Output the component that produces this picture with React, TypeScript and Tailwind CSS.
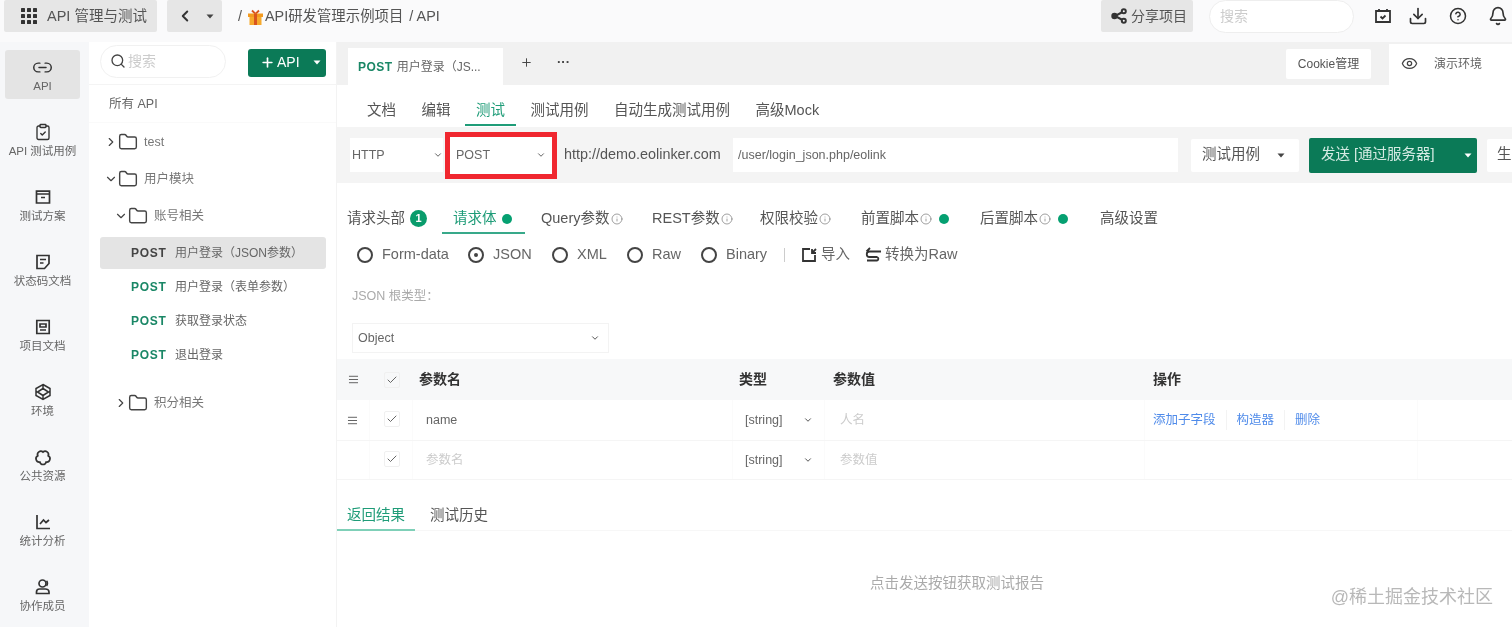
import {
  AlignJustify,
  Bell,
  Check,
  ChevronDown,
  ChevronLeft,
  ChevronRight,
  CircleHelp,
  ClipboardCheck,
  Download,
  Eye,
  Folder,
  Info,
  Link2,
  Plus,
  Search,
} from "lucide-react";
import type { ReactNode } from "react";

const FONT = "font-['Liberation_Sans','Noto_Sans_CJK_SC',sans-serif]";

function Caret({ className = "" }: { className?: string }) {
  return (
    <svg width="8" height="5" viewBox="0 0 8 5" className={`shrink-0 ${className}`}>
      <path d="M0.5 0.5h7L4 4.5z" fill="currentColor" />
    </svg>
  );
}

function GridIcon() {
  return (
    <svg width="18" height="18" viewBox="0 0 18 18" fill="#333">
      {[1, 7, 13].map((y) =>
        [1, 7, 13].map((x) => <rect key={`${x}-${y}`} x={x} y={y} width="4" height="4" rx="0.6" />)
      )}
    </svg>
  );
}

function GiftIcon() {
  return (
    <svg width="17" height="17" viewBox="0 0 17 17" className="ml-[5px] shrink-0">
      <path d="M5 1.500 8.500 5 12 1.500" fill="none" stroke="#d9541e" strokeWidth="1.800" />
      <rect x="1" y="4.500" width="15" height="3.500" fill="#f39a1f" />
      <rect x="2.500" y="8" width="12" height="8" fill="#f6a92d" />
      <rect x="7" y="4.500" width="3" height="11.500" fill="#d9541e" />
    </svg>
  );
}

function ShareIcon() {
  return (
    <svg width="18" height="18" viewBox="0 0 18 18" fill="none" stroke="#333" strokeWidth="2">
      <path d="M13.500 4.500 5 9l8.500 4.500" />
      <circle cx="13.800" cy="4.200" r="2" fill="#fafafb" />
      <circle cx="4.500" cy="9" r="2.200" fill="#333" />
      <circle cx="13.800" cy="13.800" r="2" fill="#fafafb" />
    </svg>
  );
}

function NavIcon({ name }: { name: string }) {
  const p = { width: 18, height: 18, viewBox: "0 0 18 18", fill: "none", stroke: "#333", strokeWidth: 1.7 };
  switch (name) {
    case "plan":
      return (
        <svg {...p}>
          <path d="M2.500 6V3.200h13V6M2.500 6h13v9h-13zM7 9.500h4" />
        </svg>
      );
    case "code":
      return (
        <svg {...p}>
          <path d="M3 2.500h12v8l-4.500 5H3zM6 6.500h6M6 10h3.500" />
        </svg>
      );
    case "doc":
      return (
        <svg {...p}>
          <path d="M2.800 2.500h12.400v13H2.800zM6 6h6v3H6zM6 12h6" />
        </svg>
      );
    case "env":
      return (
        <svg {...p} strokeWidth={1.5}>
          <path d="M9 1.500 16 5.500v7l-7 4-7-4v-7zM9 5.500 14.500 9 9 12.500 3.500 9zM9 1.500v4M9 12.500v4" />
        </svg>
      );
    case "res":
      return (
        <svg {...p}>
          <path d="M9 4A3.300 3.300 0 0 1 14.200 7.800A3.300 3.300 0 0 1 12.200 14A3.300 3.300 0 0 1 5.800 14A3.300 3.300 0 0 1 3.800 7.800A3.300 3.300 0 0 1 9 4z" />
        </svg>
      );
    case "stat":
      return (
        <svg {...p}>
          <path d="M3 2v13.500h13M6 11l3.500-4 2.500 2.500 3-2.500" />
        </svg>
      );
    default:
      return (
        <svg {...p}>
          <circle cx="8.500" cy="5.500" r="3.500" />
          <path d="M2.500 15.500v-1.500c0-2 1.500-3 3-3h6c1.500 0 3.500 1 3.500 3v1.500z" />
          <path d="M12.500 2.800c1.200 1 1.200 4 0 5" />
        </svg>
      );
  }
}

const navItems = [
  { icon: "link", label: "API", active: true },
  { icon: "case", label: "API 测试用例" },
  { icon: "plan", label: "测试方案" },
  { icon: "code", label: "状态码文档" },
  { icon: "doc", label: "项目文档" },
  { icon: "env", label: "环境" },
  { icon: "res", label: "公共资源" },
  { icon: "stat", label: "统计分析" },
  { icon: "team", label: "协作成员" },
];

function Sidebar() {
  return (
    <aside className="w-[89px] shrink-0 bg-[#f6f7f9] pt-[8px] pl-[5px] flex flex-col gap-[16px]">
      {navItems.map((n) => (
        <div
          key={n.label}
          className={`w-[75px] h-[49px] shrink-0 rounded-[3px] flex flex-col items-center pt-[8px] ${
            n.active ? "bg-[#e4e4e4]" : ""
          }`}
        >
          <div className="h-[18px] flex items-center justify-center">
            {n.icon === "link" ? (
              <Link2 size={21} strokeWidth={1.7} color="#333" />
            ) : n.icon === "case" ? (
              <ClipboardCheck size={18} strokeWidth={1.8} color="#333" />
            ) : (
              <NavIcon name={n.icon} />
            )}
          </div>
          <div className="mt-[2px] text-[11.5px] leading-[16px] text-[#666] whitespace-nowrap">{n.label}</div>
        </div>
      ))}
    </aside>
  );
}

function FolderRow({ open, indent, label, className = "" }: { open: boolean; indent: number; label: string; className?: string }) {
  return (
    <div className={`h-[37px] shrink-0 flex items-center text-[12.5px] text-[#777] ${className}`} style={{ paddingLeft: indent }}>
      {open ? <ChevronDown size={14} strokeWidth={2} color="#444" /> : <ChevronRight size={14} strokeWidth={2} color="#444" />}
      <Folder size={20} strokeWidth={1.7} color="#444" />
      <span className="ml-[6px] pt-[1px]">{label}</span>
    </div>
  );
}

function ApiRow({ label, active }: { label: string; active?: boolean }) {
  return (
    <div className="h-[34px] shrink-0 flex items-center">
      <div className={`w-[226px] h-[32px] ml-[11px] rounded-[3px] flex items-center pl-[31px] text-[12px] text-[#666] ${active ? "bg-[#e4e4e4]" : ""}`}>
        <span className={`font-bold tracking-[0.7px] w-[44px] ${active ? "text-[#444]" : "text-[#1a8766]"}`}>POST</span>
        <span className="whitespace-nowrap">{label}</span>
      </div>
    </div>
  );
}

function ApiTree() {
  return (
    <section className="w-[247px] shrink-0 bg-white flex flex-col">
      <div className="h-[43px] shrink-0 flex items-center pl-[11px] border-b border-[#f4f4f4]">
        <div className="w-[126px] h-[33px] rounded-full border border-[#f1f1f1] flex items-center pl-[9px] mt-[-4px]">
          <Search size={16} strokeWidth={2} color="#444" />
          <span className="ml-[2px] text-[14px] text-[#ccc]">搜索</span>
        </div>
        <div className="ml-[22px] w-[78px] h-[28px] rounded-[3px] bg-[#0b7a57] text-white flex items-center mt-[-1px] pl-[12px]">
          <Plus size={15} strokeWidth={2.6} />
          <span className="ml-[2px] text-[14px]">API</span>
          <Caret className="ml-[13px]" />
        </div>
      </div>
      <div className="h-[38px] shrink-0 flex items-center pl-[20px] pt-[2px] text-[12.5px] text-[#666] border-b border-[#fafafa]">所有 API</div>
      <FolderRow open={false} indent={15} label="test" />
      <FolderRow open indent={15} label="用户模块" />
      <FolderRow open indent={25} label="账号相关" />
      <div className="h-[2px] shrink-0" />
      <ApiRow label="用户登录（JSON参数）" active />
      <ApiRow label="用户登录（表单参数）" />
      <ApiRow label="获取登录状态" />
      <ApiRow label="退出登录" />
      <FolderRow open={false} indent={25} label="积分相关" className="mt-[12px]" />
    </section>
  );
}

function MainTabs() {
  return (
    <div className="h-[43px] shrink-0 bg-[#f1f1f1] flex">
      <div className="ml-[11px] mt-[6px] w-[155px] h-[37px] bg-white flex items-center pl-[10px] text-[12px] text-[#666]">
        <span className="font-bold text-[#1a8766] tracking-[0.5px]">POST</span>
        <span className="ml-[4px]">用户登录（JS...</span>
      </div>
      <Plus size={13} strokeWidth={1.8} color="#444" className="ml-[17px] mt-[14px]" />
      <span className="ml-[24px] mt-[12px] text-[13px] leading-[16px] font-bold text-[#444]">···</span>
      <div className="ml-auto mt-[7px] w-[85px] h-[30px] rounded-[2px] bg-white flex items-center justify-center text-[12px] text-[#555]">Cookie管理</div>
      <div className="ml-[18px] mt-[2px] w-[123px] h-[41px] bg-white flex items-center pl-[12px] pb-[2px] text-[12px] text-[#666]">
        <Eye size={17} strokeWidth={1.8} color="#444" />
        <span className="ml-[16px]">演示环境</span>
      </div>
    </div>
  );
}

function SubTabs() {
  const tabs = ["文档", "编辑", "测试", "测试用例", "自动生成测试用例", "高级Mock"];
  return (
    <div className="h-[42px] shrink-0 bg-white flex gap-[25.5px] pl-[30px] text-[14.5px] text-[#555]">
      {tabs.map((t) => (
        <div key={t} className={`relative pt-[14px] leading-[22px] whitespace-nowrap ${t === "测试" ? "text-[#1f9c78]" : ""}`}>
          {t}
          {t === "测试" && <div className="absolute left-[-11px] right-[-11px] top-[39px] h-[2px] bg-[#1f9c78]" />}
        </div>
      ))}
    </div>
  );
}

function UrlBar() {
  return (
    <div className="h-[56px] shrink-0 bg-[#f4f4f4] flex items-center pl-[13px] overflow-hidden">
      <div className="w-[93px] h-[34px] shrink-0 bg-white flex items-center pl-[2px] justify-between text-[12.5px] text-[#666]">
        HTTP
        <ChevronDown size={10} strokeWidth={2.2} color="#555" />
      </div>
      <div className="ml-[2px] w-[112px] h-[47px] shrink-0 border-[5px] border-[#f0272f] bg-white flex items-center pl-[6px] pr-[6px] justify-between text-[12.5px] text-[#666]">
        POST
        <ChevronDown size={10} strokeWidth={2.2} color="#555" />
      </div>
      <span className="ml-[7px] w-[169px] shrink-0 text-[14.4px] text-[#555] whitespace-nowrap">http://demo.eolinker.com</span>
      <div className="w-[445px] h-[34px] shrink-0 bg-white flex items-center pl-[5px] text-[12.5px] text-[#666]">/user/login_json.php/eolink</div>
      <div className="ml-[13px] w-[108px] h-[33px] shrink-0 rounded-[2px] bg-white flex items-center pl-[11px] text-[14.5px] text-[#555]">
        测试用例
        <Caret className="ml-[17px] text-[#444]" />
      </div>
      <div className="ml-[10px] w-[168px] h-[35px] shrink-0 rounded-[2px] bg-[#0b7a57] flex items-center pl-[12px] text-[14.5px] text-[#d5ebe3] whitespace-nowrap">
        发送 [通过服务器]
        <Caret className="ml-[29px] text-white" />
      </div>
      <div className="ml-[10px] w-[40px] h-[33px] shrink-0 rounded-[2px] bg-white flex items-center pl-[10px] text-[14.5px] text-[#555]">生</div>
    </div>
  );
}

const reqTabs = [
  { label: "请求头部", w: 95, badge: true },
  { label: "请求体", w: 99, active: true, dot: true },
  { label: "Query参数", w: 111, info: true },
  { label: "REST参数", w: 108, info: true },
  { label: "权限校验", w: 101, info: true },
  { label: "前置脚本", w: 119, info: true, dot: true },
  { label: "后置脚本", w: 120, info: true, dot: true },
  { label: "高级设置", w: 80 },
];

function ReqTabs() {
  return (
    <div className="h-[51px] shrink-0 flex pl-[10px] text-[14.5px] text-[#555]">
      {reqTabs.map((t) => (
        <div key={t.label} className="relative flex items-center h-[50px] pt-[21px] whitespace-nowrap" style={{ width: t.w, paddingLeft: t.active ? 11 : 0 }}>
          <span className={t.active ? "text-[#1f9c78]" : ""}>{t.label}</span>
          {t.badge && (
            <span className="ml-[5px] w-[17px] h-[17px] rounded-full bg-[#0a9c6c] text-white text-[11px] font-bold flex items-center justify-center">1</span>
          )}
          {t.info && <Info size={12} strokeWidth={1.4} color="#777" className="ml-[1px]" />}
          {t.dot && <span className={`w-[10px] h-[10px] rounded-full bg-[#05a071] ${t.active ? "ml-[5px]" : "ml-[7px]"}`} />}
          {t.active && <div className="absolute left-0 w-[83px] top-[49px] h-[2px] bg-[#38a98a]" />}
        </div>
      ))}
    </div>
  );
}

const bodyTypes = [
  { label: "Form-data", w: 111 },
  { label: "JSON", w: 84, checked: true },
  { label: "XML", w: 75 },
  { label: "Raw", w: 74 },
  { label: "Binary", w: 83 },
];

function BodyTypes() {
  return (
    <div className="h-[40px] shrink-0 flex items-center pl-[20px] pt-[1px] text-[14.5px] text-[#666]">
      {bodyTypes.map((b) => (
        <div key={b.label} className="flex items-center" style={{ width: b.w }}>
          <span className="w-[16px] h-[16px] rounded-full border-2 border-[#444] flex items-center justify-center">
            {b.checked && <span className="w-[4px] h-[4px] rounded-full bg-[#444]" />}
          </span>
          <span className="ml-[9px]">{b.label}</span>
        </div>
      ))}
      <span className="w-px h-[14px] bg-[#ccc]" />
      <svg width="16" height="16" viewBox="0 0 16 16" fill="none" stroke="#333" strokeWidth="1.8" className="ml-[16px]">
        <path d="M9 2H2v12h12V8M11 2v4h4M11 6l4-4" />
      </svg>
      <span className="ml-[4px]">导入</span>
      <svg width="18" height="16" viewBox="0 0 18 16" fill="none" stroke="#333" strokeWidth="1.8" className="ml-[14px]">
        <path d="M17 4.500H5.500a2.700 2.700 0 0 0 0 5.500H13a1.800 1.800 0 0 1 0 3.500H3M6 1 2.500 4.500" />
      </svg>
      <span className="ml-[3px]">转换为Raw</span>
    </div>
  );
}

function CheckBox() {
  return (
    <span className="w-[16px] h-[16px] border border-[#f0f0f0] rounded-[2px] flex items-center justify-center">
      <Check size={12} strokeWidth={1.8} color="#555" />
    </span>
  );
}

function Row({ className = "", cells }: { className?: string; cells: ReactNode[] }) {
  return (
    <div className={`grid grid-cols-[33px_43px_320px_92px_320px_273px_1fr] ${className}`}>
      {cells.map((c, i) => (
        <div key={i} className={`flex items-center ${i < 6 && !className.includes("head") ? "border-r border-[#fbfbfb]" : ""}`}>
          {c}
        </div>
      ))}
    </div>
  );
}

function TypeCell() {
  return (
    <div className="pl-[12px] w-full flex items-center text-[12.5px] text-[#666]">
      [string]
      <ChevronDown size={10} strokeWidth={2.4} color="#555" className="ml-[20px]" />
    </div>
  );
}

function ParamTable() {
  return (
    <div className="text-[12.5px] shrink-0">
      <Row
        className="head h-[41px] bg-[#f7f8f9] text-[14px] font-bold text-[#333]"
        cells={[
          <AlignJustify key="a" size={11} strokeWidth={2} color="#555" className="ml-[11px]" />,
          <div key="b" className="ml-[14px]"><CheckBox /></div>,
          <span key="c" className="ml-[6px]">参数名</span>,
          <span key="d" className="ml-[6px]">类型</span>,
          <span key="e" className="ml-[8px]">参数值</span>,
          <span key="f" className="ml-[8px]">操作</span>,
          null,
        ]}
      />
      <Row
        className="h-[41px] border-b border-[#f5f5f5]"
        cells={[
          <AlignJustify key="a" size={11} strokeWidth={2} color="#555" className="ml-[10px]" />,
          <div key="b" className="ml-[14px] mb-[3px]"><CheckBox /></div>,
          <span key="c" className="ml-[13px] text-[#666]">name</span>,
          <TypeCell key="d" />,
          <span key="e" className="ml-[15px] text-[#ccc]">人名</span>,
          <div key="f" className="ml-[8px] flex items-center text-[#4f8bea]">
            <span>添加子字段</span>
            <span className="mx-[10px] h-[20px] w-px bg-[#f3f3f3]" />
            <span>构造器</span>
            <span className="mx-[10px] h-[20px] w-px bg-[#f3f3f3]" />
            <span>删除</span>
          </div>,
          null,
        ]}
      />
      <Row
        className="h-[39px] border-b border-[#f5f5f5]"
        cells={[
          null,
          <div key="b" className="ml-[14px] mb-[3px]"><CheckBox /></div>,
          <span key="c" className="ml-[13px] text-[#ccc]">参数名</span>,
          <TypeCell key="d" />,
          <span key="e" className="ml-[15px] text-[#ccc]">参数值</span>,
          null,
          null,
        ]}
      />
    </div>
  );
}

function ResultArea() {
  return (
    <div className="flex-1 relative">
      <div className="mt-[22px] h-[29px] flex text-[14.5px] text-[#555] border-b border-[#f7f7f7]">
        <div className="relative w-[78px] h-[29px] pl-[10px] leading-[26px] text-[#1f9c78]">
          返回结果
          <div className="absolute left-0 right-0 top-[27px] h-[2px] bg-[#7fd0b8]" />
        </div>
        <div className="ml-[15px] leading-[26px]">测试历史</div>
      </div>
      <div className="mt-[42px] text-center text-[14.5px] leading-[20px] text-[#aaa] pl-[65px]">点击发送按钮获取测试报告</div>
    </div>
  );
}

function TopBar() {
  return (
    <header className="h-[42px] shrink-0 bg-[#fafafb] flex text-[#555]">
      <div className="ml-[4px] w-[153px] h-[32px] rounded-[2px] bg-[#e6e6e6] flex items-center pl-[16px] text-[14.5px]">
        <GridIcon />
        <span className="ml-[9px] pt-[1px]">API 管理与测试</span>
      </div>
      <div className="ml-[10px] w-[55px] h-[32px] rounded-[2px] bg-[#e6e6e6] flex items-center pl-[9px]">
        <ChevronLeft size={18} strokeWidth={2.6} color="#333" />
        <Caret className="ml-[12px] text-[#444]" />
      </div>
      <div className="ml-[16px] h-[32px] flex items-center pt-[2px] text-[14.4px]">
        <span>/</span>
        <GiftIcon />
        <span className="ml-[1px]">API研发管理示例项目</span>
        <span className="ml-[6px]">/ API</span>
      </div>
      <div className="ml-auto w-[92px] h-[32px] rounded-[2px] bg-[#e6e6e6] flex items-center pl-[9px] text-[14px]">
        <ShareIcon />
        <span className="ml-[3px] pt-[1px]">分享项目</span>
      </div>
      <div className="ml-[16px] w-[145px] h-[33px] rounded-full bg-white border border-[#eee] flex items-center pl-[10px] text-[14px] text-[#ccc]">搜索</div>
      <div className="w-[158px] h-[32px] flex items-center pl-[20px] text-[#333]">
        <svg width="18" height="18" viewBox="0 0 18 18" fill="none" stroke="#333" strokeWidth="1.8">
          <path d="M2 4h14v11H2zM5 2v3M13 2v3M6.500 9.500 8.500 11.500 11.500 8.500" />
        </svg>
        <Download size={20} strokeWidth={2} className="ml-[16px]" />
        <CircleHelp size={18} strokeWidth={2} className="ml-[21px]" />
        <Bell size={20} strokeWidth={2} className="ml-[21px]" />
      </div>
    </header>
  );
}

export default function App() {
  return (
    <div className={`relative w-[1512px] h-[627px] overflow-hidden bg-white flex flex-col blur-[0.5px] ${FONT}`}>
      <TopBar />
      <div className="flex flex-1 min-h-0">
        <Sidebar />
        <ApiTree />
        <main className="flex-1 min-w-0 flex flex-col border-l border-[#f3f3f3]">
          <MainTabs />
          <SubTabs />
          <UrlBar />
          <ReqTabs />
          <BodyTypes />
          <div className="h-[36px] shrink-0 pl-[15px] pt-[12px] text-[12.5px] leading-[20px] text-[#aaa]">JSON 根类型：</div>
          <div className="mt-[13px] ml-[15px] w-[257px] h-[30px] shrink-0 border border-[#f3f3f3] flex items-center justify-between pl-[5px] pr-[8px] text-[12.5px] text-[#666]">
            Object
            <ChevronDown size={10} strokeWidth={2.4} color="#555" />
          </div>
          <div className="h-[6px] shrink-0" />
          <ParamTable />
          <ResultArea />
        </main>
      </div>
      <div className="absolute right-[19px] bottom-[20px] text-[18px] leading-[20px] text-[#b8b8b8]">@稀土掘金技术社区</div>
    </div>
  );
}
